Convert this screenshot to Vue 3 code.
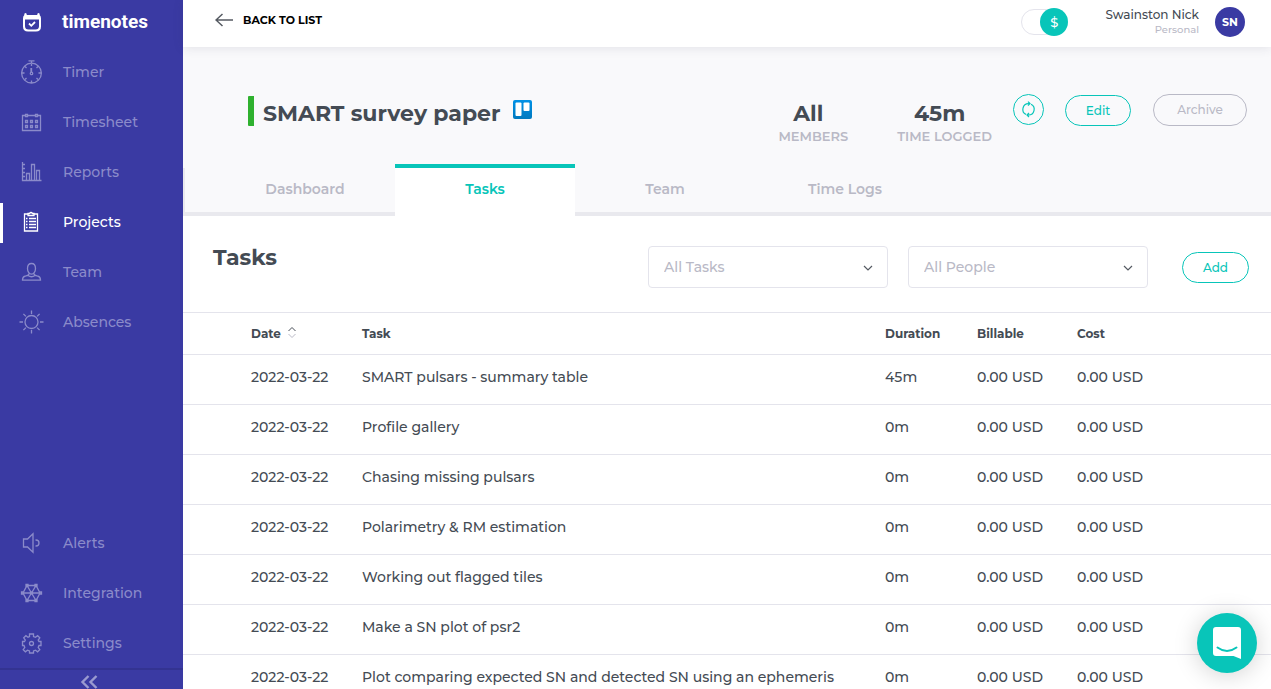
<script setup>
import { ref } from 'vue'

const mainNav = [
  { name: 'Timer', icon: 'timer' },
  { name: 'Timesheet', icon: 'timesheet' },
  { name: 'Reports', icon: 'reports' },
  { name: 'Projects', icon: 'projects' },
  { name: 'Team', icon: 'team' },
  { name: 'Absences', icon: 'absences' },
]
const bottomNav = [
  { name: 'Alerts', icon: 'alerts' },
  { name: 'Integration', icon: 'integration' },
  { name: 'Settings', icon: 'settings' },
]
const navGroups = [mainNav, bottomNav]
const activePage = ref('Projects')

const icons = {
  timer:
    'M11.500 3.200a9.900 9.900 0 1 1 0 19.800a9.900 9.900 0 1 1 0-19.800M8.500 .8h6M11.500 .8v2.400M11.500 8v4M11 8v4M11.500 12.200a1.200 1.200 0 1 1 0 2.400a1.200 1.200 0 1 1 0-2.400M11.500 4v2M11.500 20.500v2M2 13h2.500M18.500 13H21M5 6.500l1.500 1.500M18 6.500l-1.500 1.500M5 19.500l1.500-1.500M18 19.500l-1.500-1.500',
  timesheet:
    'M5 5.500H2.500v15h18v-15H18M8 5.500h7M5.500 4.500h2v2h-2zM15.500 4.500h2v2h-2zM5.500 10.500h2v2h-2zM10.500 10.500h2v2h-2zM15.500 10.500h2v2h-2zM5.500 15.500h2v2h-2zM10.500 15.500h2v2h-2zM15.500 15.500h2v2h-2z',
  reports:
    'M2.500 2v18.500h19M2.500 4.500H5M2.500 8.500H5M2.500 12.500H5M2.500 16.500H5M6.500 20.500v-7h3v7M11.500 20.500v-16h3v16M16.500 20.500v-10h3v10',
  projects:
    'M8 4H4.500v17h13V4H14M8 3.500h1.500q1.500-2 3 0H14v2H8zM6 8.500h1.500M9 8.500h7M6 11.500h1.500M9 11.500h7M6 14.500h1.500M9 14.500h7M6 17.500h1.500M9 17.500h7',
  team:
    'M11.500 3.500c2.600 0 4 2.200 4 5s-1.600 5.700-4 5.700s-4-2.900-4-5.700s1.400-5 4-5M9 13.500c0 2-2 2-4 2.600c-2 .6-2.500 2-2.500 4h18c0-2-.5-3.400-2.500-4c-2-.6-4-.6-4-2.600M8 15.500q3.500 2.500 7 0',
  absences:
    'M11.500 5.500a6.500 6.500 0 1 1 0 13a6.500 6.500 0 1 1 0-13M11.500 .5V4M11.500 20v3.500M-.5 12H3M20 12h3.500M3.400 3.900l2.500 2.500M17.100 17.600l2.500 2.500M3.400 20.100l2.500-2.500M17.100 6.400l2.500-2.500',
  alerts:
    'M3.500 8h4L13 2.700v18.600L7.500 16h-4zM15.500 9h.5a3 3 0 0 1 0 6h-.5',
  integration:
    'M7 4.500h9L20 12l-4 7.500H7L3 12zM3 12h17M7 4.500l9 15M16 4.500l-9 15M6 3.500h2v2H6zM15 3.500h2v2h-2zM6 18.500h2v2H6zM15 18.500h2v2h-2zM1.500 11h2v2h-2zM19.500 11h2v2h-2zM10.500 11h2v2h-2z',
  settings:
    'M9.500 3h4v2.500l2 .8l2.100-1.600l2.200 2.200l-1.600 2.100l.8 1.500h2v4h-2l-.8 2l1.600 2.100l-2.200 2.200l-2.100-1.600l-2 .8v2h-4v-2l-2-.8l-2.100 1.600l-2.200-2.200l1.600-2.100l-.8-2H2.500v-4h2l.8-1.500l-1.600-2.100l2.200-2.200l2.100 1.600l1.500-.8zM11.500 10.500a2 2 0 1 1 0 4a2 2 0 1 1 0-4',
}

const tabs = ['Dashboard', 'Tasks', 'Team', 'Time Logs']
const activeTab = ref('Tasks')
const billableView = ref(true)

const date = '2022-03-22'
const money = '0.00 USD'
const rows = [
  { task: 'SMART pulsars - summary table', duration: '45m' },
  { task: 'Profile gallery', duration: '0m' },
  { task: 'Chasing missing pulsars', duration: '0m' },
  { task: 'Polarimetry & RM estimation', duration: '0m' },
  { task: 'Working out flagged tiles', duration: '0m' },
  { task: 'Make a SN plot of psr2', duration: '0m' },
  { task: 'Plot comparing expected SN and detected SN using an ephemeris', duration: '0m' },
]
</script>

<template>
  <div class="app">
    <aside class="sidebar">
      <a href="#" class="brand">
        <svg class="brand-icon" viewBox="0 0 20 20" width="20" height="20" aria-hidden="true">
          <path d="M3.500 1q1.300 0 1.300 2h10.400q0-2 1.300-2t1.300 2.300q1.200 1 1.200 3.200v8q0 5-5 5H6q-5 0-5-5v-8q0-2.200 1.200-3.200Q2.200 1 3.500 1z" fill="#fff" />
          <path d="M3 7.500h14V14q0 3.600-3.600 3.600H6.600Q3 17.600 3 14z" fill="#3a3aa3" />
          <path d="M7 11.500l2.300 2.300L13 10" fill="none" stroke="#fff" stroke-width="1.800" />
        </svg>
        <span>timenotes</span>
      </a>
      <nav v-for="(group, i) in navGroups" :key="i" class="nav">
        <a
          v-for="item in group"
          :key="item.name"
          href="#"
          class="nav-item"
          :class="{ active: activePage === item.name }"
          @click.prevent="activePage = item.name"
        >
          <svg class="line-icon" viewBox="0 0 24 24" width="24" height="24" aria-hidden="true">
            <path :d="icons[item.icon]" />
          </svg>
          <span>{{ item.name }}</span>
        </a>
      </nav>
      <button class="collapse" type="button" aria-label="Collapse menu">
        <svg viewBox="0 0 18 16" width="18" height="16" aria-hidden="true">
          <path d="M8.500 2l-6 6l6 6M16.500 2l-6 6l6 6" />
        </svg>
      </button>
    </aside>

    <main class="main">
      <header class="topbar">
        <a href="#" class="back">
          <svg viewBox="0 0 18 14" width="18" height="14" aria-hidden="true">
            <path d="M18 7H1M7.500 1L1 7l6.500 6" />
          </svg>
          <span>BACK TO LIST</span>
        </a>
        <label class="switch">
          <input v-model="billableView" type="checkbox" aria-label="Show amounts" />
          <span class="knob">$</span>
        </label>
        <div class="user">
          <span class="user-name">Swainston Nick</span>
          <span class="user-plan">Personal</span>
        </div>
        <button class="avatar" type="button">SN</button>
      </header>

      <section class="project">
        <div class="project-head">
          <h1>SMART survey paper</h1>
          <svg class="board-icon" viewBox="0 0 19 19" width="19" height="19" aria-hidden="true">
            <defs>
              <linearGradient id="board" x1="0" y1="0" x2="0" y2="1">
                <stop offset="0" stop-color="#0091e6" />
                <stop offset="1" stop-color="#0079bf" />
              </linearGradient>
            </defs>
            <rect width="19" height="19" rx="2" fill="url(#board)" />
            <rect x="2.500" y="2.500" width="6" height="13.500" rx="1" fill="#fff" />
            <rect x="10.500" y="2.500" width="6" height="8.500" rx="1" fill="#fff" />
          </svg>
          <dl class="stats">
            <div><dd>All</dd><dt>MEMBERS</dt></div>
            <div><dd>45m</dd><dt>TIME LOGGED</dt></div>
          </dl>
          <button class="pill round" type="button" aria-label="Synchronise">
            <svg viewBox="0 0 16 18" width="16" height="18" aria-hidden="true">
              <path d="M5 14.400A5.700 5.700 0 0 1 7.500 3.600H9M7 1.600l2 2l-2 2M10 4.200A5.700 5.700 0 0 1 7.500 15H6M8 13l-2 2l2 2" />
            </svg>
          </button>
          <button class="pill edit" type="button">Edit</button>
          <button class="pill archive" type="button">Archive</button>
        </div>
        <nav class="tabs">
          <a
            v-for="tab in tabs"
            :key="tab"
            href="#"
            :class="{ active: activeTab === tab }"
            @click.prevent="activeTab = tab"
          >{{ tab }}</a>
        </nav>
      </section>

      <section class="tasks">
        <div class="toolbar">
          <h2>Tasks</h2>
          <div class="select">
            <select aria-label="Task filter"><option>All Tasks</option></select>
            <svg viewBox="0 0 10 8" width="10" height="8" aria-hidden="true"><path d="M1 2l4 4l4-4" /></svg>
          </div>
          <div class="select">
            <select aria-label="People filter"><option>All People</option></select>
            <svg viewBox="0 0 10 8" width="10" height="8" aria-hidden="true"><path d="M1 2l4 4l4-4" /></svg>
          </div>
          <button class="pill add" type="button">Add</button>
        </div>
        <table>
          <colgroup>
            <col class="c-date" /><col /><col class="c-duration" /><col class="c-billable" /><col class="c-cost" />
          </colgroup>
          <thead>
            <tr>
              <th scope="col">
                Date
                <svg class="sort" viewBox="0 0 8 12" width="8" height="12" aria-hidden="true">
                  <path d="M.5 5L4 1.500L7.500 5" stroke="#474d56" />
                  <path d="M.5 8L4 11.500L7.500 8" stroke="#b9b9c6" />
                </svg>
              </th>
              <th scope="col">Task</th>
              <th scope="col">Duration</th>
              <th scope="col">Billable</th>
              <th scope="col">Cost</th>
            </tr>
          </thead>
          <tbody>
            <tr v-for="row in rows" :key="row.task">
              <td>{{ date }}</td>
              <td>{{ row.task }}</td>
              <td>{{ row.duration }}</td>
              <td>{{ money }}</td>
              <td>{{ money }}</td>
            </tr>
          </tbody>
        </table>
      </section>
    </main>

    <button class="chat" type="button" aria-label="Open chat">
      <svg viewBox="0 0 28 32" width="28" height="32" aria-hidden="true">
        <path d="M3 0h22q3 0 3 3v29l-7.500-3H3q-3 0-3-3V3q0-3 3-3z" fill="#fff" />
        <path d="M4.500 20.500q9.500 7 19 0" fill="none" stroke="#08c5b9" stroke-width="2" stroke-linecap="round" />
      </svg>
    </button>
  </div>
</template>

<style>
body {
  margin: 0;
}
</style>

<style scoped>
.app {
  display: flex;
  height: 100vh;
  overflow: hidden;
  background: #fff;
  color: #444b54;
  font-family: Montserrat, Inter, 'Open Sans', sans-serif;
  font-size: 14px;
  font-weight: 500;
}
.app * {
  box-sizing: border-box;
}
a {
  color: inherit;
  text-decoration: none;
}
button,
select {
  font: inherit;
  cursor: pointer;
}
svg {
  flex: none;
}

.sidebar {
  display: flex;
  flex: 0 0 183px;
  flex-direction: column;
  background: #3a3aa3;
}
.brand {
  display: flex;
  align-items: center;
  gap: 20px;
  height: 47px;
  padding: 0 0 4px 22px;
  color: #fff;
  font-family: Roboto, sans-serif;
  font-size: 19px;
  font-weight: 700;
}
.nav + .nav {
  margin-top: auto;
}
.nav-item {
  display: flex;
  align-items: center;
  gap: 19px;
  height: 50px;
  padding-left: 20px;
  color: #8b8bca;
  position: relative;
}
.nav-item.active {
  color: #fff;
}
.nav-item.active::before {
  position: absolute;
  top: 6px;
  left: 0;
  width: 3px;
  height: 40px;
  background: #fff;
  content: '';
}
.line-icon {
  overflow: visible;
  fill: none;
  stroke: currentColor;
  stroke-width: 1.300;
}
.collapse {
  display: flex;
  justify-content: center;
  height: 21px;
  padding: 4px 6px 0 0;
  overflow: hidden;
  border: 0;
  border-top: 2px solid #333391;
  background: none;
}
.collapse path {
  fill: none;
  stroke: #9a9ad0;
  stroke-width: 2.400;
}

.main {
  flex: 1;
  min-width: 0;
}
.topbar {
  display: flex;
  position: relative;
  align-items: center;
  height: 47px;
  padding: 0 26px 3px 32px;
  background: #fff;
  box-shadow: 0 1px 10px rgba(60, 60, 90, 0.12);
}
.back {
  display: flex;
  align-items: center;
  gap: 10px;
  margin-right: auto;
  padding-bottom: 4px;
  color: #000;
  font-size: 11px;
  font-weight: 700;
}
.back path {
  fill: none;
  stroke: #555a62;
  stroke-width: 1.500;
}
.switch {
  display: flex;
  position: relative;
  align-items: center;
  width: 47px;
  height: 28px;
  margin-right: 37px;
  cursor: pointer;
}
.switch input {
  width: 46px;
  height: 26px;
  margin: 0;
  appearance: none;
  border: 1px solid #e4e4ec;
  border-radius: 13px;
}
.knob {
  position: absolute;
  right: 0;
  width: 28px;
  border-radius: 50%;
  background: #08c5b9;
  color: #fff;
  font-size: 13px;
  line-height: 28px;
  text-align: center;
}
.user {
  display: flex;
  flex-direction: column;
  align-items: flex-end;
  margin-right: 16px;
}
.user-name {
  font-size: 12px;
  line-height: 16px;
}
.user-plan {
  color: #b9b9c6;
  font-size: 10px;
  line-height: 14px;
}
.avatar {
  width: 30px;
  height: 30px;
  padding: 0;
  border: 0;
  border-radius: 50%;
  background: #3a3aa3;
  color: #fff;
  font-size: 11px;
  font-weight: 700;
}

.project {
  background: #f9f9fb;
}
.project-head {
  display: flex;
  align-items: flex-start;
  height: 117px;
  padding: 47px 24px 0 65px;
}
h1,
h2 {
  margin: 0;
  font-size: 22px;
  font-weight: 700;
}
h1 {
  height: 30px;
  margin-top: 2px;
  padding-left: 9px;
  border-left: 6px solid #2fb12f;
  border-radius: 1px;
  line-height: 36px;
  white-space: nowrap;
}
.board-icon {
  margin: 6px auto 0 13px;
}
.stats {
  display: flex;
  gap: 49px;
  margin: 7px 21px 0 0;
  text-align: center;
}
.stats dd {
  margin: 0;
  padding-right: 10px;
  font-size: 22px;
  font-weight: 700;
  line-height: 26px;
}
.stats dt {
  color: #b9b9c6;
  font-size: 13px;
  font-weight: 600;
  line-height: 18px;
  white-space: nowrap;
}
.pill {
  height: 31px;
  padding: 0 0 1px;
  border: 1px solid #08c5b9;
  border-radius: 16px;
  background: transparent;
  color: #08c5b9;
  font-size: 12px;
}
.round {
  display: flex;
  align-items: center;
  justify-content: center;
  width: 31px;
  margin-right: 21px;
}
.round path {
  fill: none;
  stroke: currentColor;
  stroke-width: 1.200;
}
.edit {
  width: 66px;
  margin: 1px 22px 0 0;
}
.archive {
  width: 94px;
  height: 32px;
  border-color: #b9b9c6;
  color: #b9b9c6;
}
.tabs {
  display: flex;
  align-items: flex-end;
  padding-left: 32px;
  background:
    linear-gradient(#e9e9ee, #e9e9ee) 0 4px / 2px 100% no-repeat,
    linear-gradient(#e9e9ee, #e9e9ee) 0 100% / 100% 4px no-repeat;
}
.tabs a {
  width: 180px;
  height: 52px;
  border-top: 4px solid transparent;
  color: #b9b9c6;
  font-weight: 600;
  line-height: 42px;
  text-align: center;
}
.tabs a.active {
  border-color: #08c5b9;
  background: #fff;
  color: #08c5b9;
}

.toolbar {
  display: flex;
  align-items: flex-start;
  height: 96px;
  padding: 30px 22px 0 30px;
}
.toolbar h2 {
  margin-right: auto;
  line-height: 24px;
}
.select {
  display: grid;
  align-items: center;
  margin-right: 20px;
}
.select select {
  grid-area: 1 / 1;
  width: 240px;
  height: 42px;
  padding: 0 15px;
  appearance: none;
  border: 1px solid #e4e4ec;
  border-radius: 4px;
  background: #fff;
  color: #b9b9c6;
}
.select svg {
  grid-area: 1 / 1;
  justify-self: end;
  margin: 2px 15px 0 0;
  pointer-events: none;
}
.select path {
  fill: none;
  stroke: #555a62;
  stroke-width: 1.200;
}
.add {
  width: 67px;
  margin: 6px 0 0 14px;
}

table {
  width: 100%;
  border-collapse: separate;
  border-spacing: 0;
  border-top: 1px solid #e4e4ec;
  table-layout: fixed;
}
.c-date {
  width: 179px;
}
.c-duration {
  width: 92px;
}
.c-billable {
  width: 100px;
}
.c-cost {
  width: 194px;
}
th,
td {
  padding: 0 0 6px;
  border-bottom: 1px solid #e4e4ec;
  text-align: left;
  white-space: nowrap;
}
th {
  height: 42px;
  padding-bottom: 0;
  font-size: 12px;
  font-weight: 700;
}
td {
  height: 50px;
}
th:first-child,
td:first-child {
  padding-left: 68px;
}
.sort {
  margin-left: 4px;
  fill: none;
  stroke-width: 1;
}

.chat {
  display: flex;
  position: fixed;
  right: 14px;
  bottom: 16px;
  align-items: center;
  justify-content: center;
  width: 60px;
  height: 60px;
  border: 0;
  border-radius: 50%;
  background: #08c5b9;
  box-shadow: 0 2px 24px rgba(0, 0, 0, 0.18);
}
</style>
